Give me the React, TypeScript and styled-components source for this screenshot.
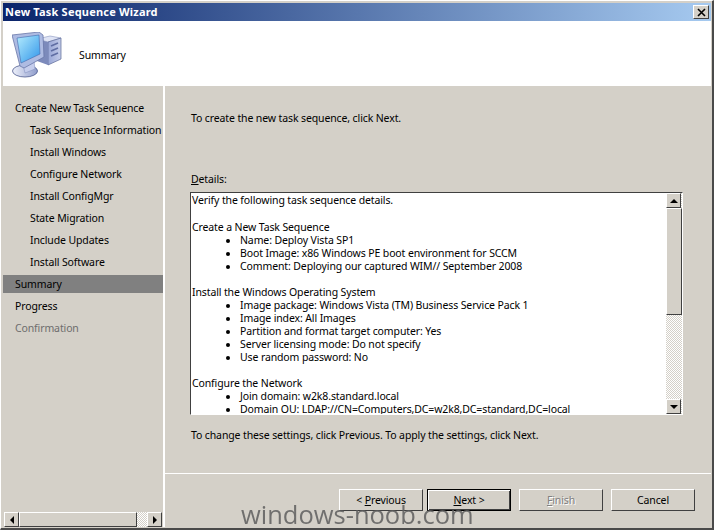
import { createGlobalStyle, styled } from "styled-components";

const GlobalStyle = createGlobalStyle`
    html, body {
        margin: 0;
        padding: 0;
        background: #d4d0c8;
    }
    body {
        font-family: "Noto Sans", "Liberation Sans", sans-serif;
        font-size: 10.5px;
        letter-spacing: -0.12px;
        color: #000;
    }
`

const STEPS = [
    { label: "Create New Task Sequence" },
    { label: "Task Sequence Information", sub: true },
    { label: "Install Windows", sub: true },
    { label: "Configure Network", sub: true },
    { label: "Install ConfigMgr", sub: true },
    { label: "State Migration", sub: true },
    { label: "Include Updates", sub: true },
    { label: "Install Software", sub: true },
    { label: "Summary", active: true },
    { label: "Progress" },
    { label: "Confirmation", disabled: true },
]

const DETAILS = [
    {
        title: "Create a New Task Sequence",
        items: [
            "Name: Deploy Vista SP1",
            "Boot Image: x86 Windows PE boot environment for SCCM",
            "Comment: Deploying our captured WIM// September 2008",
        ],
    },
    {
        title: "Install the Windows Operating System",
        items: [
            "Image package: Windows Vista (TM) Business Service Pack 1",
            "Image index: All Images",
            "Partition and format target computer: Yes",
            "Server licensing mode: Do not specify",
            "Use random password: No",
        ],
    },
    {
        title: "Configure the Network",
        items: [
            "Join domain: w2k8.standard.local",
            "Domain OU: LDAP://CN=Computers,DC=w2k8,DC=standard,DC=local",
        ],
    },
]

function ComputerIcon() {
    return (
        <svg width="50" height="46" viewBox="0 0 50 46">
            <defs>
                <linearGradient id="screen" x1="0" y1="0" x2="1" y2="1">
                    <stop offset="0" stopColor="#b5ecfd" />
                    <stop offset="1" stopColor="#2f95ea" />
                </linearGradient>
                <linearGradient id="tower" x1="0" y1="0" x2="1" y2="0">
                    <stop offset="0" stopColor="#98a6d6" />
                    <stop offset="1" stopColor="#c3cbe8" />
                </linearGradient>
                <linearGradient id="base" x1="0" y1="0" x2="1" y2="0">
                    <stop offset="0" stopColor="#eef1fb" />
                    <stop offset="1" stopColor="#8f9ccb" />
                </linearGradient>
            </defs>
            <path d="M25 7 L38 4 L49 6 L36 10 Z" fill="#dfe4f5" stroke="#8a96c0" strokeWidth="0.6" />
            <path d="M36 10 L49 6 L49 27 L36 33 Z" fill="url(#tower)" stroke="#5a6797" strokeWidth="0.7" />
            <path d="M25 7 L36 10 L36 33 L25 29 Z" fill="#7c8abb" />
            <path d="M39 14 L46 11 M39 19 L46 16 M39 24 L46 21" stroke="#5f6da3" strokeWidth="1.6" />
            <ellipse cx="13" cy="39" rx="12.5" ry="6" fill="url(#base)" stroke="#4d5a8e" strokeWidth="0.8" />
            <path d="M11 33 L22 29 L23 37 L13 41 Z" fill="#c5cdec" stroke="#7d8abb" strokeWidth="0.5" />
            <path d="M0 3 L27 0 L31 3 L32 25 L12 36 L8 34 Z" fill="#aebbe2" stroke="#6977a8" strokeWidth="0.8" />
            <path d="M5 6 L27 3 L28 22 L9 31 Z" fill="url(#screen)" stroke="#3f68ad" strokeWidth="0.6" />
        </svg>
    )
}

function App() {
    return (
        <Win>
            <GlobalStyle />
            <TitleBar>
                <span>New Task Sequence Wizard</span>
                <CloseBox>
                    <svg width="9" height="9" viewBox="0 0 9 9">
                        <path d="M1 1 L8 8 M8 1 L1 8" stroke="#000" strokeWidth="1.6" />
                    </svg>
                </CloseBox>
            </TitleBar>
            <Banner>
                <ComputerIcon />
                <BannerTitle>Summary</BannerTitle>
            </Banner>
            <Body>
                <Sidebar>
                    <StepList>
                        {STEPS.map((s) => (
                            <Step key={s.label} $sub={s.sub} $active={s.active} $disabled={s.disabled}>
                                {s.label}
                            </Step>
                        ))}
                    </StepList>
                    <HScroll>
                        <ScrollBtn>
                            <Arrow $dir="left" />
                        </ScrollBtn>
                        <HThumb />
                        <HTrack />
                        <ScrollBtn>
                            <Arrow $dir="right" />
                        </ScrollBtn>
                    </HScroll>
                </Sidebar>
                <Main>
                    <Content>
                        <Intro>To create the new task sequence, click Next.</Intro>
                        <DetailsLabel><u>D</u>etails:</DetailsLabel>
                        <ListBox>
                            <ListText>
                                <Lead>Verify the following task sequence details.</Lead>
                                {DETAILS.map((d) => (
                                    <Group key={d.title}>
                                        <Line>{d.title}</Line>
                                        <Bullets>
                                            {d.items.map((i) => (
                                                <li key={i}>{i}</li>
                                            ))}
                                        </Bullets>
                                    </Group>
                                ))}
                            </ListText>
                            <VScroll>
                                <ScrollBtn>
                                    <Arrow $dir="up" />
                                </ScrollBtn>
                                <VThumb />
                                <VTrack />
                                <ScrollBtn>
                                    <Arrow $dir="down" />
                                </ScrollBtn>
                            </VScroll>
                        </ListBox>
                        <Hint>To change these settings, click Previous. To apply the settings, click Next.</Hint>
                    </Content>
                    <Footer>
                        <WizButton>
                            <span>&lt; <u>P</u>revious</span>
                        </WizButton>
                        <WizButton $default>
                            <span><u>N</u>ext &gt;</span>
                        </WizButton>
                        <WizButton $disabled $gap>
                            <span><u>F</u>inish</span>
                        </WizButton>
                        <WizButton $gap>
                            <span>Cancel</span>
                        </WizButton>
                    </Footer>
                </Main>
            </Body>
            <Watermark>windows-noob.com</Watermark>
        </Win>
    );
}

const Win = styled.div`
    position: relative;
    width: 714px;
    height: 530px;
    box-sizing: border-box;
    padding: 2px 1px 1px 2px;
    display: flex;
    flex-direction: column;
    overflow: hidden;
    background: #d4d0c8;
    border-top: 1px solid #fff;
    border-left: 1px solid #fff;
    border-right: 2px solid #4a4a4a;
    border-bottom: 2px solid #4a4a4a;
`

const TitleBar = styled.div`
    height: 18px;
    flex: none;
    display: flex;
    align-items: center;
    justify-content: space-between;
    padding: 0 2px 2px 2px;
    box-sizing: border-box;
    color: #fff;
    font-weight: 700;
    font-size: 11px;
    letter-spacing: 0.2px;
    background: linear-gradient(to right, #0a246a, #a6caf0);
`

const CloseBox = styled.div`
    width: 16px;
    height: 14px;
    margin-top: 2px;
    box-sizing: border-box;
    background: #d4d0c8;
    border: 1px solid;
    border-color: #fff #404040 #404040 #fff;
    display: flex;
    align-items: center;
    justify-content: center;
`

const Banner = styled.div`
    height: 65px;
    flex: none;
    box-sizing: border-box;
    background: #fff;
    display: flex;
    align-items: center;
    padding: 3px 0 0 9px;
    gap: 17px;
`

const BannerTitle = styled.div`
    font-size: 10.5px;
`

const Body = styled.div`
    flex: 1;
    display: flex;
    min-height: 0;
`

const Sidebar = styled.div`
    width: 160px;
    flex: none;
    display: flex;
    flex-direction: column;
    border-right: 2px solid #fff;
`

const StepList = styled.div`
    flex: 1;
    padding-top: 13px;
    display: flex;
    flex-direction: column;
    gap: 4px;
`

const Step = styled.div<{ $sub?: boolean; $active?: boolean; $disabled?: boolean }>`
    height: 18px;
    line-height: 18px;
    padding-left: ${(p) => (p.$sub ? 27 : 12)}px;
    white-space: nowrap;
    background: ${(p) => (p.$active ? "#808080" : "transparent")};
    color: ${(p) => (p.$disabled ? "#6d6d6d" : "#000")};
`

const HScroll = styled.div`
    height: 15px;
    margin: 0 1px;
    display: flex;
    flex: none;
`

const ScrollBtn = styled.div`
    width: 15px;
    height: 15px;
    flex: none;
    box-sizing: border-box;
    background: #d4d0c8;
    border: 1px solid;
    border-color: #fff #404040 #404040 #fff;
    display: flex;
    align-items: center;
    justify-content: center;
`

const Arrow = styled.div<{ $dir: "up" | "down" | "left" | "right" }>`
    width: 0;
    height: 0;
    border-style: solid;
    border-color: transparent;
    ${(p) => p.$dir === "up" && "border-width: 0 4px 4px 4px; border-bottom-color: #000;"}
    ${(p) => p.$dir === "down" && "border-width: 4px 4px 0 4px; border-top-color: #000;"}
    ${(p) => p.$dir === "left" && "border-width: 4px 4px 4px 0; border-right-color: #000;"}
    ${(p) => p.$dir === "right" && "border-width: 4px 0 4px 4px; border-left-color: #000;"}
`

const HThumb = styled.div`
    flex: 1;
    box-sizing: border-box;
    background: #d4d0c8;
    border: 1px solid;
    border-color: #fff #404040 #404040 #fff;
`

const ditherTrack = `
    background-color: #fff;
    background-image: conic-gradient(#d4d0c8 25%, #fff 0 50%, #d4d0c8 0 75%, #fff 0);
    background-size: 2px 2px;
`

const HTrack = styled.div`
    width: 10px;
    flex: none;
    ${ditherTrack}
`

const Main = styled.div`
    flex: 1;
    display: flex;
    flex-direction: column;
    min-width: 0;
`

const Content = styled.div`
    flex: 1;
    padding: 24px 28px 0 25px;
    display: flex;
    flex-direction: column;
    border-bottom: 1px solid #fff;
`

const Intro = styled.div`
    height: 16px;
    line-height: 16px;
    padding-left: 1px;
`

const DetailsLabel = styled.div`
    margin-top: 45px;
    height: 16px;
    line-height: 16px;
    padding-left: 1px;
`

const ListBox = styled.div`
    margin-top: 5px;
    height: 223px;
    flex: none;
    box-sizing: border-box;
    background: #fff;
    border: 1px solid;
    border-color: #404040 #fff #fff #404040;
    display: flex;
    overflow: hidden;
`

const ListText = styled.div`
    flex: 1;
    min-width: 0;
    padding: 1px 0 0 1px;
    overflow: hidden;
    line-height: 13px;
`

const Line = styled.div`
    height: 13px;
    line-height: 13px;
    white-space: nowrap;
`

const Lead = styled(Line)`
    height: 14px;
`

const Group = styled.div`
    margin-top: 13px;
`

const Bullets = styled.ul`
    margin: 0;
    padding: 0 0 0 48px;
    li {
        height: 13px;
        line-height: 13px;
        white-space: nowrap;
    }
`

const VScroll = styled.div`
    width: 16px;
    flex: none;
    display: flex;
    flex-direction: column;
    ${ditherTrack}
`

const VThumb = styled.div`
    height: 107px;
    flex: none;
    box-sizing: border-box;
    background: #d4d0c8;
    border: 1px solid;
    border-color: #fff #404040 #404040 #fff;
`

const VTrack = styled.div`
    flex: 1;
`

const Hint = styled.div`
    margin-top: 12px;
    height: 16px;
    line-height: 16px;
    padding-left: 1px;
`

const Footer = styled.div`
    height: 53px;
    flex: none;
    box-sizing: border-box;
    padding: 15px 16px 0 0;
    display: flex;
    justify-content: flex-end;
    gap: 4px;
`

const WizButton = styled.div<{ $default?: boolean; $disabled?: boolean; $gap?: boolean }>`
    width: 84px;
    height: 22px;
    box-sizing: border-box;
    margin-left: ${(p) => (p.$gap ? 4 : 0)}px;
    display: flex;
    align-items: center;
    justify-content: center;
    white-space: pre;
    background: #d4d0c8;
    border: 1px solid;
    border-color: ${(p) => (p.$default ? "#000" : "#fff #404040 #404040 #fff")};
    box-shadow: ${(p) => (p.$default ? "inset 1px 1px 0 #fff, inset -1px -1px 0 #404040" : "none")};
    color: ${(p) => (p.$disabled ? "#808080" : "#000")};
    text-shadow: ${(p) => (p.$disabled ? "1px 1px 0 #fff" : "none")};
`

const Watermark = styled.div`
    position: absolute;
    left: 240px;
    top: 497px;
    font-family: "Open Sans", sans-serif;
    font-size: 25.5px;
    letter-spacing: 0;
    line-height: 32px;
    color: #5f5f5f;
    opacity: 0.85;
    white-space: nowrap;
`

export default App;
